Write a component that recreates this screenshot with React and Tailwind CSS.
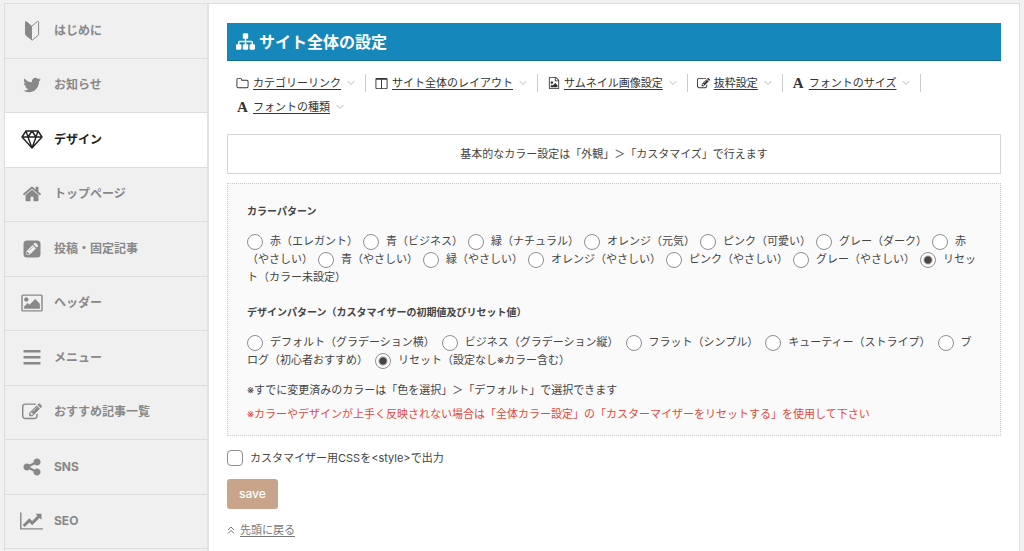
import React from "react";

const P = {
  twitter:
    "M1684 408q-67 98-162 167 1 14 1 42 0 130-38 259.5t-115.5 248.5-184.5 210.5-258 146-323 54.5q-271 0-496-145 35 4 78 4 225 0 401-138-105-2-188-64.5t-114-159.5q33 5 61 5 43 0 85-11-112-23-185.5-111.5t-73.5-205.5v-4q68 38 146 41-66-44-105-115t-39-154q0-88 44-163 121 149 294.5 238.5t371.5 99.5q-8-38-8-74 0-134 94.5-228.5t228.5-94.5q140 0 236 102 109-21 205-78-37 115-142 178 93-10 186-50z",
  home: "M1472 992v480q0 26-19 45t-45 19h-384v-384h-256v384h-384q-26 0-45-19t-19-45v-480q0-1 .5-3t.5-3l575-474 575 474q1 2 1 6zm223-69l-62 74q-8 9-21 11h-3q-13 0-21-7l-692-577-692 577q-12 8-24 7-13-2-21-11l-62-74q-8-10-7-23.5t11-21.5l719-599q32-26 76-26t76 26l244 204v-195q0-14 9-23t23-9h192q14 0 23 9t9 23v408l219 182q10 8 11 21.5t-7 23.5z",
  edit: "M888 1184l116-116-152-152-116 116v56h96v96h56zm440-720q-16-16-33 1l-350 350q-17 17-1 33t33-1l350-350q17-17 1-33zm80 594v190q0 119-84.5 203.5t-203.5 84.5h-832q-119 0-203.5-84.5t-84.5-203.5v-832q0-119 84.5-203.5t203.5-84.5h832q63 0 117 25 15 7 18 23 3 17-9 29l-49 49q-14 14-32 8-23-6-45-6h-832q-66 0-113 47t-47 113v832q0 66 47 113t113 47h832q66 0 113-47t47-113v-126q0-13 9-22l64-64q15-15 35-7t20 29zm-96-738l288 288-672 672h-288v-288zm444 132l-92 92-288-288 92-92q28-28 68-28t68 28l152 152q28 28 28 68t-28 68z",
  picture:
    "M576 576q0 80-56 136t-136 56-136-56-56-136 56-136 136-56 136 56 56 136zm1024 384v448h-1408v-192l320-320 160 160 512-512zm96-704h-1600q-13 0-22.5 9.5t-9.5 22.5v1216q0 13 9.5 22.5t22.5 9.5h1600q13 0 22.5-9.5t9.5-22.5v-1216q0-13-9.5-22.5t-22.5-9.5zm160 32v1216q0 66-47 113t-113 47h-1600q-66 0-113-47t-47-113v-1216q0-66 47-113t113-47h1600q66 0 113 47t47 113z",
  chart:
    "M2048 1536v128h-2048v-1536h128v1408h1920zm-128-1248v435q0 21-19.5 29.5t-35.5-7.5l-121-121-633 633q-10 10-23 10t-23-10l-233-233-416 416-192-192 585-585q10-10 23-10t23 10l233 233 464-464-121-121q-16-16-7.5-35.5t29.5-19.5h435q14 0 23 9t9 23z",
  share:
    "M1344 1024q133 0 226.5 93.5t93.5 226.5-93.5 226.5-226.5 93.5-226.5-93.5-93.5-226.5q0-12 2-34l-360-180q-92 86-218 86-133 0-226.5-93.5t-93.5-226.5 93.5-226.5 226.5-93.5q126 0 218 86l360-180q-2-22-2-34 0-133 93.5-226.5t226.5-93.5 226.5 93.5 93.5 226.5-93.5 226.5-226.5 93.5q-126 0-218-86l-360 180q2 22 2 34t-2 34l360 180q92-86 218-86z",
  sitemap:
    "M1792 1248v320q0 40-28 68t-68 28h-320q-40 0-68-28t-28-68v-320q0-40 28-68t68-28h96v-192h-512v192h96q40 0 68 28t28 68v320q0 40-28 68t-68 28h-320q-40 0-68-28t-28-68v-320q0-40 28-68t68-28h96v-192h-512v192h96q40 0 68 28t28 68v320q0 40-28 68t-68 28h-320q-40 0-68-28t-28-68v-320q0-40 28-68t68-28h96v-192q0-52 38-90t90-38h512v-192h-96q-40 0-68-28t-28-68v-320q0-40 28-68t68-28h320q40 0 68 28t28 68v320q0 40-28 68t-68 28h-96v192h512q52 0 90 38t38 90v192h96q40 0 68 28t28 68z",
  folder:
    "M1600 1312v-704q0-40-28-68t-68-28h-704q-40 0-68-28t-28-68v-64q0-40-28-68t-68-28h-320q-40 0-68 28t-28 68v960q0 40 28 68t68 28h1216q40 0 68-28t28-68zm128-704v704q0 92-66 158t-158 66h-1216q-92 0-158-66t-66-158v-960q0-92 66-158t158-66h320q92 0 158 66t66 158v32h672q92 0 158 66t66 158z",
  columns:
    "M224 1536h608v-1152h-640v1120q0 13 9.5 22.5t22.5 9.5zm1376-32v-1120h-640v1152h608q13 0 22.5-9.5t9.5-22.5zm128-1216v1216q0 66-47 113t-113 47h-1344q-66 0-113-47t-47-113v-1216q0-66 47-113t113-47h1344q66 0 113 47t47 113z",
  fileImage:
    "M1596 380q28 28 48 76t20 88v1152q0 40-28 68t-68 28h-1344q-40 0-68-28t-28-68v-1600q0-40 28-68t68-28h896q40 0 88 20t76 48zm-444-244v376h376q-10-29-22-41l-313-313q-12-12-41-22zm384 1528v-1024h-416q-40 0-68-28t-28-68v-416h-768v1536h1280zm-128-448v320h-1024v-192l192-192 128 128 384-384zm-832-192q-80 0-136-56t-56-136 56-136 136-56 136 56 56 136-56 136-136 56z",
};

function Icon({ name, box = "0 0 1792 1792", className }) {
  return (
    <svg viewBox={box} className={className} fill="currentColor" aria-hidden="true">
      <path d={P[name]} />
    </svg>
  );
}

const Beginner = () => (
  <svg viewBox="0 0 16 22" className="h-[22px] w-4" aria-hidden="true">
    <path d="M1 2.2Q1 1 2.3 1.3L8 6V20.5L2 15.8Q1 15 1 13.6Z" fill="currentColor" />
    <path
      d="M8 6L13.4 1.5Q14.6 1 14.6 2.3V13.6Q14.6 15 13.6 15.8L8 20.4"
      fill="none"
      stroke="currentColor"
      strokeWidth="1"
    />
  </svg>
);

const Diamond = () => (
  <svg
    viewBox="0 0 22 19"
    className="h-[19px] w-[22px]"
    fill="none"
    stroke="currentColor"
    strokeWidth="1.4"
    strokeLinejoin="round"
    aria-hidden="true"
  >
    <path d="M5 1H17L21 7L11 18L1 7Z M1 7H21 M5 1L7 7L11 18L15 7L17 1 M7 7L11 1L15 7" />
  </svg>
);

const PencilSquare = () => (
  <svg viewBox="0 0 18 18" className="h-[18px] w-[18px]" aria-hidden="true">
    <rect x="0.5" y="0.5" width="17" height="17" rx="3.5" fill="currentColor" />
    <path d="M3.3 14.7V11.4L9.6 5.1L12.9 8.4L6.6 14.7Z" fill="#f0f0f0" />
    <path d="M10.4 4.3L11.6 3.1Q12.2 2.6 12.8 3.1L14.9 5.2Q15.4 5.8 14.9 6.4L13.7 7.6Z" fill="#f0f0f0" />
    <path d="M4.3 11.9L6.1 13.7L5.5 14H4V12.4Z M6.2 10.6L10.1 6.7" fill="currentColor" stroke="currentColor" strokeWidth="0.6" />
  </svg>
);

const Bars = () => (
  <svg viewBox="0 0 18 15" className="h-[15px] w-[18px]" fill="currentColor" aria-hidden="true">
    <rect x="0.5" y="0" width="17" height="2.6" rx="0.6" />
    <rect x="0.5" y="6" width="17" height="2.6" rx="0.6" />
    <rect x="0.5" y="12" width="17" height="2.6" rx="0.6" />
  </svg>
);

const menu = [
  ["はじめに", <Beginner />],
  ["お知らせ", <Icon name="twitter" className="h-5 w-5" />],
  ["デザイン", <Diamond />],
  ["トップページ", <Icon name="home" className="h-5 w-5" />],
  ["投稿・固定記事", <PencilSquare />],
  ["ヘッダー", <Icon name="picture" box="-64 0 1920 1792" className="h-5 w-[22px]" />],
  ["メニュー", <Bars />],
  ["おすすめ記事一覧", <Icon name="edit" className="h-5 w-5" />],
  ["SNS", <Icon name="share" className="h-5 w-5" />],
  ["SEO", <Icon name="chart" box="0 0 2048 1792" className="h-5 w-[23px]" />],
];

const LetterA = () => (
  <span aria-hidden="true" className="font-['Liberation_Serif',serif] text-[15px] leading-none font-bold">
    A
  </span>
);

const sections = [
  ["カテゴリーリンク", <Icon name="folder" className="h-[13px] w-[13px]" />],
  ["サイト全体のレイアウト", <Icon name="columns" className="h-[13px] w-[13px]" />],
  ["サムネイル画像設定", <Icon name="fileImage" className="h-3 w-3" />],
  ["抜粋設定", <Icon name="edit" className="h-[13px] w-[13px]" />],
  ["フォントのサイズ", <LetterA />],
  ["フォントの種類", <LetterA />],
];

const colors = [
  "赤（エレガント）",
  "青（ビジネス）",
  "緑（ナチュラル）",
  "オレンジ（元気）",
  "ピンク（可愛い）",
  "グレー（ダーク）",
  "赤（やさしい）",
  "青（やさしい）",
  "緑（やさしい）",
  "オレンジ（やさしい）",
  "ピンク（やさしい）",
  "グレー（やさしい）",
  "リセット（カラー未設定）",
];

const designs = [
  "デフォルト（グラデーション横）",
  "ビジネス（グラデーション縦）",
  "フラット（シンプル）",
  "キューティー（ストライプ）",
  "ブログ（初心者おすすめ）",
  "リセット（設定なし※カラー含む）",
];

function RadioGroup({ title, name, options, gap }) {
  return (
    <fieldset>
      <legend className="mb-3 text-[10px] leading-[18px] font-bold">{title}</legend>
      {options.map((o, i) => (
        <label key={o} className={gap}>
          <input
            type="radio"
            name={name}
            defaultChecked={i === options.length - 1}
            className="mr-[7px] -mb-[5px] inline-block h-4 w-4 appearance-none rounded-full border border-[#8c8f94] bg-white bg-clip-padding align-baseline checked:bg-[radial-gradient(circle,#4a4440_0_3px,#fff_5px)]"
          />
          {o}
        </label>
      ))}
    </fieldset>
  );
}

export default function App() {
  return (
    <div className="min-h-screen bg-[#f1f1f1] px-1 pt-[3px] font-[Inter,'Noto_Sans_CJK_JP',sans-serif] text-[11px] leading-[18px] text-[#444]">
      <div className="flex min-h-[548px] border border-b-0 border-[#ddd] bg-white">
        <nav className="w-[204px] shrink-0 border-r-2 border-[#e2e2e2] bg-[#f0f0f0]">
          <ul className="grid min-h-[545px] auto-rows-fr">
            {menu.map(([label, icon]) => (
              <li key={label} className="border-b border-[#dedede]">
                <a
                  href="#"
                  className={
                    label === "デザイン"
                      ? "flex h-full items-center bg-white pl-[15px] text-[12px] font-bold text-[#222]"
                      : "flex h-full items-center pl-[15px] text-[12px] font-bold text-[#888]"
                  }
                >
                  <span className="mr-[11px] flex w-[23px] justify-center">{icon}</span>
                  {label}
                </a>
              </li>
            ))}
          </ul>
        </nav>

        <main className="min-w-0 flex-1 px-[18px] pt-[19px]">
          <h1 className="flex h-[38px] items-center border-b border-[#12719b] bg-[#1587ba] px-[9px] text-[16px] font-bold text-white">
            <Icon name="sitemap" className="mr-1 h-[19px] w-[19px]" />
            サイト全体の設定
          </h1>

          <ul className="mt-[13px] flex flex-wrap gap-y-[6px]">
            {sections.map(([label, icon], i) => (
              <li
                key={label}
                className={
                  i === sections.length - 1
                    ? "flex h-[18px] items-center pr-[10px] pl-[9px] text-[#333]"
                    : "flex h-[18px] items-center border-r border-[#ccc] pr-[10px] pl-[9px] text-[#333]"
                }
              >
                <span className="mr-1 flex w-[13px] justify-center">{icon}</span>
                <a href="#" className="underline underline-offset-2">
                  {label}
                </a>
                <svg viewBox="0 0 8 8" className="ml-[6px] h-2 w-2" fill="none" stroke="#bbb" aria-hidden="true">
                  <path d="M0.7 2L4 5.5L7.3 2" />
                </svg>
              </li>
            ))}
          </ul>

          <p className="mt-[18px] border border-[#d5d5d5] py-[10px] text-center">
            基本的なカラー設定は「外観」＞「カスタマイズ」で行えます
          </p>

          <div className="mt-[9px] border border-dotted border-[#ccc] bg-[#fafafa] px-[19px] pt-[18px] pb-3">
            <div className="space-y-[17px]">
              <RadioGroup title="カラーパターン" name="color" options={colors} gap="mr-[5px]" />
              <RadioGroup
                title="デザインパターン（カスタマイザーの初期値及びリセット値）"
                name="design"
                options={designs}
                gap="mr-[7px]"
              />
            </div>
            <p className="mt-3">※すでに変更済みのカラーは「色を選択」＞「デフォルト」で選択できます</p>
            <p className="mt-[6px] text-[#dd4b41]">
              ※カラーやデザインが上手く反映されない場合は「全体カラー設定」の「カスターマイザーをリセットする」を使用して下さい
            </p>
          </div>

          <label className="mt-[13px] flex items-center">
            <input
              type="checkbox"
              className="mr-[7px] h-4 w-4 appearance-none rounded border border-[#8c8f94] bg-white checked:bg-[#8c8f94]"
            />
            カスタマイザー用CSSを&lt;style&gt;で出力
          </label>

          <button
            type="button"
            className="mt-3 block h-[30px] rounded-[3px] bg-[#c8a58a] px-3 text-[12px] font-medium text-white"
          >
            save
          </button>

          <p className="mt-3 flex items-center text-[#777]">
            <svg viewBox="0 0 8 8" className="mr-[5px] h-2 w-2" fill="none" stroke="currentColor" aria-hidden="true">
              <path d="M1 4L4 1L7 4M1 7.5L4 4.5L7 7.5" />
            </svg>
            <a href="#" className="underline underline-offset-2">
              先頭に戻る
            </a>
          </p>
        </main>
      </div>
    </div>
  );
}
